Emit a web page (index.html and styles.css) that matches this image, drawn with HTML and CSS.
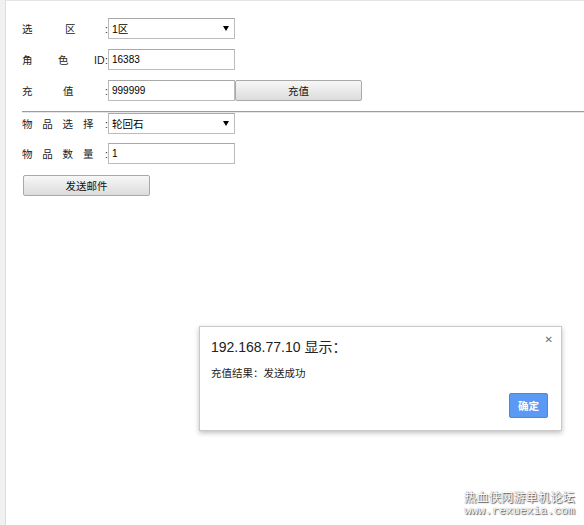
FILE: index.html
```html
<!DOCTYPE html>
<html lang="zh-CN">
<head>
    <meta charset="UTF-8">
    <title>GM 工具</title>
    <link rel="stylesheet" href="styles.css">
</head>
<body>
    <div class="page">
        <form class="gm-form">
            <div class="row">
                <label class="field-name"><span><span class="ls-xuanqu">选</span>区</span><span>:</span></label>
                <div class="select-wrap">
                    <select class="field">
                        <option>1区</option>
                    </select>
                </div>
            </div>
            <div class="row">
                <label class="field-name"><span><span class="ls-juese">角色</span>ID</span><span>:</span></label>
                <input class="field" type="text" value="16383">
            </div>
            <div class="row">
                <label class="field-name"><span><span class="ls-chongzhi">充</span>值</span><span>:</span></label>
                <input class="field" type="text" value="999999">
                <button type="button" class="btn">充值</button>
            </div>

            <hr class="split">

            <div class="row row-item">
                <label class="field-name"><span><span class="ls-wupin">物品选</span>择</span><span>:</span></label>
                <div class="select-wrap">
                    <select class="field">
                        <option>轮回石</option>
                    </select>
                </div>
            </div>
            <div class="row row-count">
                <label class="field-name"><span><span class="ls-wupin">物品数</span>量</span><span>:</span></label>
                <input class="field" type="text" value="1">
            </div>
            <button type="button" class="btn btn-send">发送邮件</button>
        </form>

        <!-- alert box shown after sending -->
        <div class="dialog">
            <span class="dialog-close">&#x2715;</span>
            <div class="dialog-title">192.168.77.10 显示：</div>
            <div class="dialog-msg">充值结果：发送成功</div>
            <div class="dialog-foot">
                <button type="button" class="btn-ok">确定</button>
            </div>
        </div>

        <div class="watermark">
            <div class="wm-name">热血侠网游单机论坛</div>
            <div class="wm-url">www.rexuexia.com</div>
        </div>
    </div>
</body>
</html>
```

FILE: styles.css
```css
html, body {
    margin: 0;
    padding: 0;
    height: 100%;
}

body {
    background-color: #f1f1f1;
    font-family: "Noto Sans CJK SC", sans-serif;
    font-size: 10.5px;
    color: #222;
}

.page {
    position: relative;
    box-sizing: border-box;
    min-height: 525px;
    margin-left: 5px;
    background-color: #ffffff;
    border-left: 1px solid #dedede;
    border-top: 1px solid #e4e4e4;
}

.gm-form {
    padding: 17px 0 0 16px;
}

.row {
    display: flex;
    align-items: center;
    height: 21px;
    margin-bottom: 10px;
}

.row-item {
    margin-bottom: 9px;
}

.row-count {
    margin-bottom: 11px;
}

.field-name {
    display: flex;
    justify-content: space-between;
    align-items: center;
    width: 86px;
    font-family: "Liberation Sans", "Noto Sans CJK SC", sans-serif;
}

.field-name span {
    white-space: nowrap;
}

/* spacing of the label characters (last character left out) */
.ls-xuanqu { letter-spacing: 32.5px; }
.ls-juese { letter-spacing: 25.5px; }
.ls-chongzhi { letter-spacing: 30.5px; }
.ls-wupin { letter-spacing: 9.8px; }

.field {
    box-sizing: border-box;
    width: 127px;
    height: 21px;
    margin: 0;
    padding: 0 0 0 3px;
    border: 1px solid #bcbcbc;
    border-top-color: #a8a8a8;
    background: #fff;
    font-family: "Liberation Sans", "Noto Sans CJK SC", sans-serif;
    font-size: 10px;
    color: #000;
    outline: none;
}

select.field {
    appearance: none;
    -webkit-appearance: none;
    border-radius: 0;
    font-size: 10.5px;
}

.select-wrap {
    position: relative;
    height: 21px;
}

.select-wrap::after {
    content: "";
    position: absolute;
    right: 6px;
    top: 8px;
    border-left: 3px solid transparent;
    border-right: 3px solid transparent;
    border-top: 5px solid #000;
    pointer-events: none;
}

.btn {
    box-sizing: border-box;
    width: 127px;
    height: 21px;
    margin: 0;
    padding: 0;
    border: 1px solid #a9a9a9;
    border-radius: 2px;
    background: linear-gradient(#f7f7f7, #dcdcdc);
    font-family: "Noto Sans CJK SC", sans-serif;
    font-size: 10.5px;
    color: #111;
}

.btn-send {
    margin-left: 1px;
}

.split {
    height: 0;
    margin: 10px 0 0 0;
    border: 0;
    border-top: 1px solid #9c9c9c;
    border-bottom: 1px solid #e6e6e6;
}

/* alert popup */
.dialog {
    position: absolute;
    left: 193px;
    top: 325px;
    box-sizing: border-box;
    width: 363px;
    height: 105px;
    padding: 11px 13px 12px 11px;
    display: flex;
    flex-direction: column;
    background: #fff;
    border: 1px solid #c9c9c9;
    box-shadow: 0 2px 5px rgba(0, 0, 0, 0.25);
}

.dialog-close {
    position: absolute;
    right: 8px;
    top: 7px;
    font-size: 10px;
    font-weight: bold;
    color: #6e6e6e;
    font-family: "DejaVu Sans", sans-serif;
}

.dialog-title {
    line-height: 18px;
    font-family: "Liberation Sans", "Noto Sans CJK SC", sans-serif;
    font-size: 14px;
    color: #222;
}

.dialog-msg {
    margin-top: 10px;
    line-height: 14px;
    font-size: 10.5px;
    color: #222;
}

.dialog-foot {
    margin-top: auto;
    display: flex;
    justify-content: flex-end;
}

.btn-ok {
    box-sizing: border-box;
    width: 39px;
    height: 25px;
    padding: 0;
    border: 1px solid #4a86e8;
    border-radius: 2px;
    background: #5b9af4;
    color: #ffffff;
    font-family: "Noto Sans CJK SC", sans-serif;
    font-size: 10.5px;
    font-weight: bold;
}

/* forum watermark, bottom right */
.watermark {
    position: absolute;
    right: 9px;
    bottom: 8px;
    color: #ffffff;
    text-align: center;
    text-shadow: 1px 1px 1px #555, 0 0 1px #777;
}

.wm-name {
    font-size: 12px;
    line-height: 14px;
    letter-spacing: 0.3px;
}

.wm-url {
    margin-top: 1px;
    font-family: "Liberation Mono", monospace;
    font-size: 11.5px;
    line-height: 12px;
}
```
